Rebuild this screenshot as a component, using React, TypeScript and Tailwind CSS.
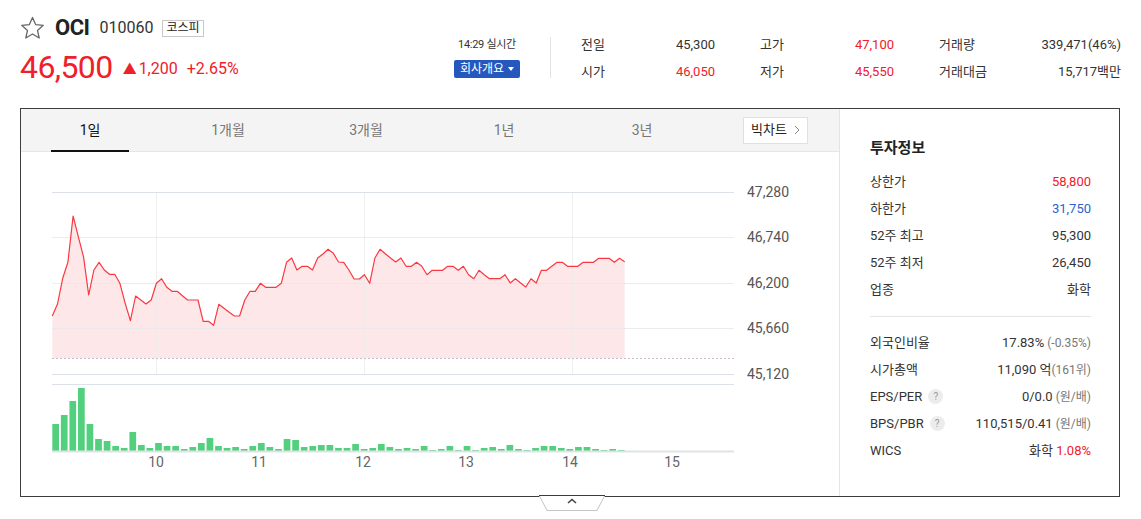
import React from 'react';

const priceY = [
  316, 304, 278.3, 262.3, 216, 236.7, 256.7, 295, 270, 262.3, 270, 274.3, 274.3, 283.3, 303.3, 320.7,
  296, 300, 304, 300, 283.3, 278.7, 287.3, 291.3, 291.3, 295.7, 300, 300, 300, 321.3, 321.3, 325.3,
  304.3, 308.3, 312.3, 316, 316, 300, 291.3, 291.3, 283.3, 287.3, 287.3, 287.3, 283.3, 262.3, 258, 270,
  266.3, 266.3, 270, 258, 254, 249.3, 253.3, 262, 262.3, 270, 279, 279, 274.7, 283.3, 258, 249.3,
  253.7, 258, 262, 258,
  266.3, 266.3, 262.3, 266.3, 274.7, 270.3, 270.3, 270.3, 266.3, 266.3, 270.3, 266.3, 274.7, 278.7,
  270.3, 274.7, 278.7, 278.7, 278.7, 274.7, 283, 278.7, 283, 287, 278.7, 283, 270.3, 270.3, 266.3,
  262.3, 262.3, 266.3, 266.3, 266.3, 262.3, 262.3, 262.3, 258.3, 258.3, 258.3, 262.3, 258.3, 261.7,
];

const volumes = [
  27, 36, 50, 63, 27, 12, 10, 5, 3, 19, 6, 3, 8, 5, 5, 2, 4, 8, 13, 5, 3, 4, 2, 5, 8, 4, 2, 12, 11, 4, 5, 6, 6,
  3, 3, 7, 2, 3, 7, 4, 2, 3, 2, 5, 1, 2, 5, 1, 5, 1, 3, 4, 2, 6, 2, 1, 3, 5, 5, 3, 2, 4, 4, 2, 1, 2, 1,
];

const quotes = [
  { label: '전일', value: '45,300', red: false },
  { label: '고가', value: '47,100', red: true },
  { label: '거래량', value: '339,471(46%)', red: false },
  { label: '시가', value: '46,050', red: true },
  { label: '저가', value: '45,550', red: true },
  { label: '거래대금', value: '15,717백만', red: false },
];

const tabs = ['1일', '1개월', '3개월', '1년', '3년'];

function Star() {
  return (
    <svg width="25" height="24" viewBox="0 0 25 24" className="shrink-0">
      <polygon
        points="12.5,1.5 15.6,8.6 23.3,9.3 17.5,14.4 19.2,22 12.5,18 5.8,22 7.5,14.4 1.7,9.3 9.4,8.6"
        fill="none"
        stroke="#666"
        strokeWidth="1.3"
        strokeLinejoin="round"
      />
    </svg>
  );
}

function Help() {
  return (
    <span className="ml-[6px] inline-flex h-[15px] w-[15px] items-center justify-center rounded-full bg-[#ececec] text-[10px] leading-none text-[#999]">
      ?
    </span>
  );
}

function Chart() {
  const step = 572.4 / (priceY.length - 1);
  const pts = priceY.map((y, i) => `${(52.3 + i * step).toFixed(1)},${y}`).join(' ');
  const area = `M52.3,358 L${pts} L624.7,358 Z`;
  const gridY = [237.5, 283.5, 328.5];
  const labels = [
    { y: 193, t: '47,280' },
    { y: 238.5, t: '46,740' },
    { y: 284.5, t: '46,200' },
    { y: 329.5, t: '45,660' },
    { y: 375.5, t: '45,120' },
  ];
  const hours = [
    { x: 156, t: '10' },
    { x: 259, t: '11' },
    { x: 363, t: '12' },
    { x: 466, t: '13' },
    { x: 570, t: '14' },
    { x: 672, t: '15' },
  ];
  return (
    <svg width="818" height="344" viewBox="21 152 818 344" className="block">
      <path d={area} fill="#fde7e9" />
      {[156.5, 364.5, 572.5].map((x) => (
        <line key={x} x1={x} x2={x} y1={192} y2={374} stroke="#ececec" strokeWidth="1" opacity="0.8" />
      ))}
      {gridY.map((y) => (
        <line key={y} x1={52} x2={734} y1={y} y2={y} stroke="#e9e9ec" strokeWidth="1" opacity="0.85" />
      ))}
      <line x1={52} x2={734} y1={192.5} y2={192.5} stroke="#dce1e8" strokeWidth="1" />
      <line x1={52} x2={734} y1={374.5} y2={374.5} stroke="#dce1e8" strokeWidth="1" />
      <line x1={52} x2={734} y1={358.5} y2={358.5} stroke="#c9bcc3" strokeWidth="1" strokeDasharray="2 2" />
      <polyline points={pts} fill="none" stroke="#fa3840" strokeWidth="1.2" strokeLinejoin="round" />
      {labels.map((l) => (
        <text
          key={l.t}
          x={747}
          y={l.y}
          dominantBaseline="middle"
          fontSize="14"
          fill="#555"
          fontFamily="Roboto, 'Noto Sans CJK KR', sans-serif"
        >
          {l.t}
        </text>
      ))}
      <line x1={52} x2={734} y1={384.5} y2={384.5} stroke="#dce1e8" strokeWidth="1" />
      {volumes.map((h, i) => (
        <rect key={i} x={52.3 + i * 8.57} y={451 - h} width={6.7} height={h} fill="#52d07e" />
      ))}
      <line x1={52} x2={734} y1={451.5} y2={451.5} stroke="#dfe3e8" strokeWidth="2" />
      {hours.map((h) => (
        <text
          key={h.t}
          x={h.x}
          y={463}
          textAnchor="middle"
          dominantBaseline="middle"
          fontSize="14"
          fill="#666"
          fontFamily="Roboto, 'Noto Sans CJK KR', sans-serif"
        >
          {h.t}
        </text>
      ))}
    </svg>
  );
}

export default function App() {
  return (
    <div className="w-[1141px] h-[519px] bg-white px-[20px] font-['Roboto','Noto_Sans_CJK_KR',sans-serif] text-[#333]">
      {/* header */}
      <div className="flex h-[108px] justify-between">
        <div className="pt-[16px]">
          <div className="flex h-[24px] items-center">
            <Star />
            <span className="ml-[10px] text-[22px] font-bold leading-none text-[#222] tracking-[-0.5px]">OCI</span>
            <span className="ml-[10px] text-[16px] leading-none text-[#333]">010060</span>
            <span className="ml-[9px] border border-[#c8c8c8] px-[3px] text-[12px] leading-[15px] text-[#222]">코스피</span>
          </div>
          <div className="mt-[11px] flex h-[32px] items-center text-[#f0202a]">
            <span className="text-[32px] leading-none tracking-[-0.6px]">46,500</span>
            <span className="ml-[10px] mt-[4px] text-[14px] leading-none">▲</span>
            <span className="ml-[2px] mt-[4px] text-[16px] leading-none">1,200</span>
            <span className="ml-[9px] mt-[4px] text-[16px] leading-none">+2.65%</span>
          </div>
        </div>

        <div className="flex items-start pt-[31px]">
          <div className="flex w-[66px] flex-col items-center pt-[6px]">
            <span className="mt-[1px] text-[11px] leading-[14px] text-[#333] tracking-[-0.3px]">14:29 실시간</span>
            <span className="mt-[8px] flex h-[18px] w-[66px] items-center justify-center gap-[4px] rounded-[2px] bg-[#2458be] text-[12px] leading-none text-white">
              회사개요
              <svg width="6" height="4" viewBox="0 0 6 4">
                <polygon points="0,0 6,0 3,4" fill="#fff" />
              </svg>
            </span>
          </div>
          <div className="mx-[30px] mt-[6px] h-[41px] w-px bg-[#e2e2e2]" />
          <div className="grid grid-cols-[134px_134px_182px] grid-rows-[27px_27px] gap-x-[45px]">
            {quotes.map((q) => (
              <div key={q.label} className="flex h-[27px] items-center justify-between text-[13px] leading-none">
                <span className="text-[#333]">{q.label}</span>
                <span className={q.red ? 'text-[#f0202a]' : 'text-[#333]'}>{q.value}</span>
              </div>
            ))}
          </div>
        </div>
      </div>

      {/* chart box */}
      <div className="relative flex h-[389px] w-[1100px] border border-[#3d3d3d]">
        <div className="w-[819px] border-r border-[#e4e4e4]">
          <div className="flex h-[43px] items-center border-b border-[#e6e6e6] bg-[#f4f4f4]">
            {tabs.map((t, i) => (
              <div
                key={t}
                className={`relative flex h-full w-[138px] items-center justify-center text-[14px] ${
                  i === 0 ? 'text-[#111]' : 'text-[#777]'
                }`}
              >
                {t}
                {i === 0 && <span className="absolute bottom-[-1px] left-[30px] h-[2px] w-[78px] bg-[#111]" />}
              </div>
            ))}
            <div className="ml-[32px] flex h-[27px] w-[65px] items-center justify-center gap-[7px] border border-[#e0e0e0] bg-white text-[13px] text-[#222]">
              빅차트
              <svg width="6" height="10" viewBox="0 0 6 10">
                <polyline points="1,1 5,5 1,9" fill="none" stroke="#888" strokeWidth="1" />
              </svg>
            </div>
          </div>
          <Chart />
        </div>

        <div className="flex-1 pl-[30px] pr-[28px] pt-[29px] text-[13px]">
          <div className="h-[20px] text-[15px] font-bold leading-[20px] text-[#222]">투자정보</div>
          <div className="mt-[10px]">
            {[
              ['상한가', '58,800', 'text-[#f0202a]'],
              ['하한가', '31,750', 'text-[#2c5fd2]'],
              ['52주 최고', '95,300', 'text-[#333]'],
              ['52주 최저', '26,450', 'text-[#333]'],
              ['업종', '화학', 'text-[#333]'],
            ].map(([l, v, c]) => (
              <div key={l} className="flex h-[27px] items-center justify-between">
                <span>{l}</span>
                <span className={c}>{v}</span>
              </div>
            ))}
          </div>
          <div className="mt-[13px] border-t border-[#e5e5e5] pt-[12px]">
            <div className="flex h-[27px] items-center justify-between">
              <span>외국인비율</span>
              <span>
                17.83%<span className="ml-[3px] text-[12px] text-[#777]">(-0.35%)</span>
              </span>
            </div>
            <div className="flex h-[27px] items-center justify-between">
              <span>시가총액</span>
              <span>
                11,090 억<span className="text-[12px] text-[#777]">(161위)</span>
              </span>
            </div>
            <div className="flex h-[27px] items-center justify-between">
              <span className="flex items-center">
                EPS/PER
                <Help />
              </span>
              <span>
                0/0.0<span className="ml-[3px] text-[12px] text-[#777]">(원/배)</span>
              </span>
            </div>
            <div className="flex h-[27px] items-center justify-between">
              <span className="flex items-center">
                BPS/PBR
                <Help />
              </span>
              <span>
                110,515/0.41<span className="ml-[3px] text-[12px] text-[#777]">(원/배)</span>
              </span>
            </div>
            <div className="flex h-[27px] items-center justify-between">
              <span>WICS</span>
              <span>
                화학 <span className="text-[#f0202a]">1.08%</span>
              </span>
            </div>
          </div>
        </div>

        {/* collapse toggle */}
        <svg width="66" height="17" viewBox="0 0 66 17" className="absolute left-[518px] top-[386px]">
          <polygon points="0,0 66,0 58,15.5 8,15.5" fill="#fff" stroke="#c4c4c4" strokeWidth="1" />
          <line x1="0" x2="66" y1="0.5" y2="0.5" stroke="#3d3d3d" strokeWidth="1" />
          <polyline points="29,8 33,4.5 37,8" fill="none" stroke="#444" strokeWidth="1.6" />
        </svg>
      </div>
    </div>
  );
}
